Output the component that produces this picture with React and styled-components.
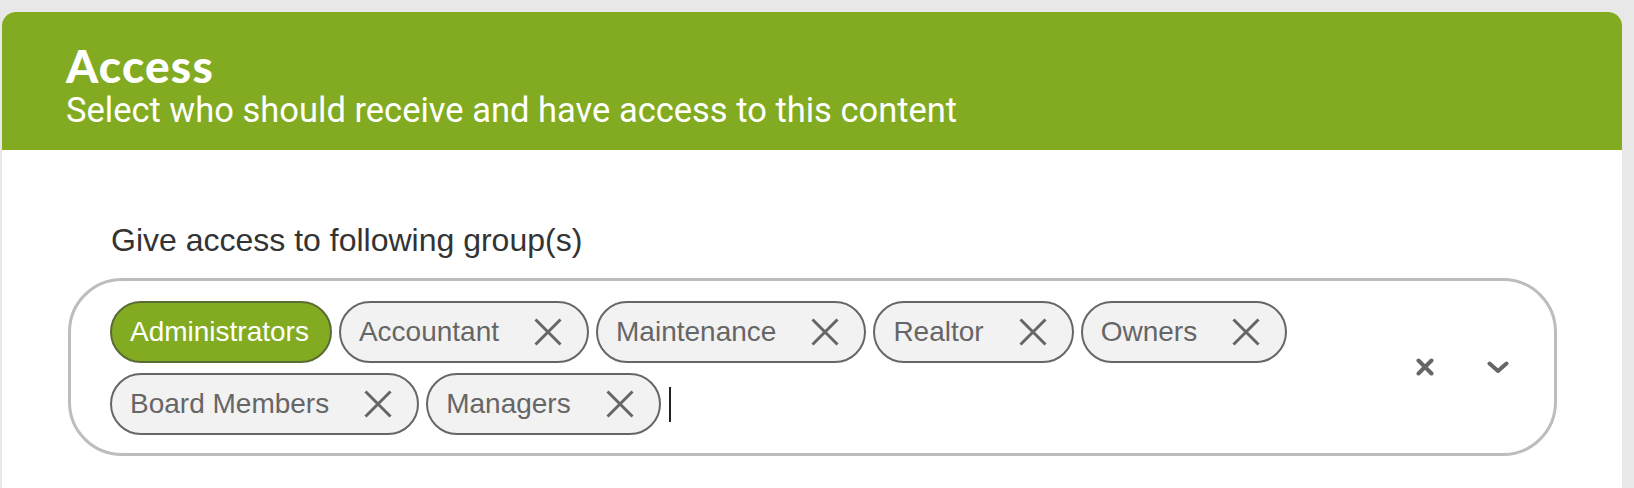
import React from "react";
import styled, { createGlobalStyle } from "styled-components";

const GlobalStyle = createGlobalStyle`
  * { box-sizing: border-box; }
  html, body { margin: 0; padding: 0; }
  body {
    background: #e8e8e8;
    font-family: "Liberation Sans", Arial, sans-serif;
  }
`;

const Page = styled.div`
  padding: 12px 12px 0 2px;
  min-height: 488px;
`;

const Card = styled.section`
  background: #ffffff;
  border-radius: 14px 14px 0 0;
  overflow: hidden;
  min-height: 476px;
`;

const Header = styled.header`
  background: #82ab21;
  height: 138px;
  padding: 30px 64px 0 64px;
  color: #ffffff;
`;

const Title = styled.h2`
  margin: 0;
  font-family: Lato, "Open Sans", sans-serif;
  font-weight: 900;
  font-size: 46px;
  line-height: 48px;
  letter-spacing: 1.2px;
`;

const Subtitle = styled.p`
  margin: 0;
  font-family: Roboto, "Noto Sans", sans-serif;
  font-weight: 400;
  font-size: 34.5px;
  line-height: 40px;
`;

const Body = styled.div`
  padding: 72px 65px 0 66px;
`;

const Label = styled.label`
  display: block;
  margin: 0 0 20px 43px;
  font-size: 32px;
  line-height: 36px;
  color: #333333;
`;

const Control = styled.div`
  display: flex;
  align-items: center;
  min-height: 178px;
  border: 3px solid #bdbdbd;
  border-radius: 54px;
  background: #ffffff;
`;

const ValueContainer = styled.div`
  flex: 1;
  display: flex;
  flex-wrap: wrap;
  align-items: center;
  gap: 10px 7px;
  padding: 20px 0 18px 39px;
`;

const Chip = styled.div`
  display: flex;
  align-items: center;
  height: 62px;
  padding: 0 ${(p) => (p.$fixed ? "21px" : "25px")} 0 18px;
  border: 2px solid ${(p) => (p.$fixed ? "#5b6b35" : "#666666")};
  border-radius: 31px;
  background: ${(p) => (p.$fixed ? "#82ab21" : "#f2f2f2")};
  color: ${(p) => (p.$fixed ? "#ffffff" : "#666666")};
  font-size: 28px;
  line-height: 32px;
  white-space: nowrap;
`;

const RemoveButton = styled.span`
  display: flex;
  margin-left: 35px;
  color: #666666;
`;

const Caret = styled.span`
  width: 2px;
  height: 35px;
  margin-left: 1px;
  background: #222222;
`;

const Indicators = styled.div`
  display: flex;
  align-items: center;
  gap: 53px;
  padding: 0 45px 0 24px;
  color: #666666;
`;

const CrossIcon = () => (
  <svg width="28" height="28" viewBox="0 0 28 28" fill="none">
    <path d="M1.5 1.5 L26.5 26.5 M26.5 1.5 L1.5 26.5" stroke="currentColor" strokeWidth="3" />
  </svg>
);

const ClearIcon = () => (
  <svg width="18" height="18" viewBox="0 0 18 18" fill="none">
    <path
      d="M2.5 2.5 L15.5 15.5 M15.5 2.5 L2.5 15.5"
      stroke="currentColor"
      strokeWidth="4"
      strokeLinecap="round"
    />
  </svg>
);

const ChevronIcon = () => (
  <svg width="22" height="13" viewBox="0 0 22 13" fill="none">
    <path
      d="M2.5 2.5 L11 10 L19.5 2.5"
      stroke="currentColor"
      strokeWidth="4"
      strokeLinecap="round"
      strokeLinejoin="round"
    />
  </svg>
);

const groups = [
  { name: "Administrators", fixed: true },
  { name: "Accountant" },
  { name: "Maintenance" },
  { name: "Realtor" },
  { name: "Owners" },
  { name: "Board Members" },
  { name: "Managers" },
];

export default function App() {
  return (
    <>
      <GlobalStyle />
      <Page>
        <Card>
          <Header>
            <Title>Access</Title>
            <Subtitle>Select who should receive and have access to this content</Subtitle>
          </Header>
          <Body>
            <Label>Give access to following group(s)</Label>
            <Control>
              <ValueContainer>
                {groups.map((g) => (
                  <Chip key={g.name} $fixed={g.fixed}>
                    {g.name}
                    {!g.fixed && (
                      <RemoveButton>
                        <CrossIcon />
                      </RemoveButton>
                    )}
                  </Chip>
                ))}
                <Caret />
              </ValueContainer>
              <Indicators>
                <ClearIcon />
                <ChevronIcon />
              </Indicators>
            </Control>
          </Body>
        </Card>
      </Page>
    </>
  );
}
